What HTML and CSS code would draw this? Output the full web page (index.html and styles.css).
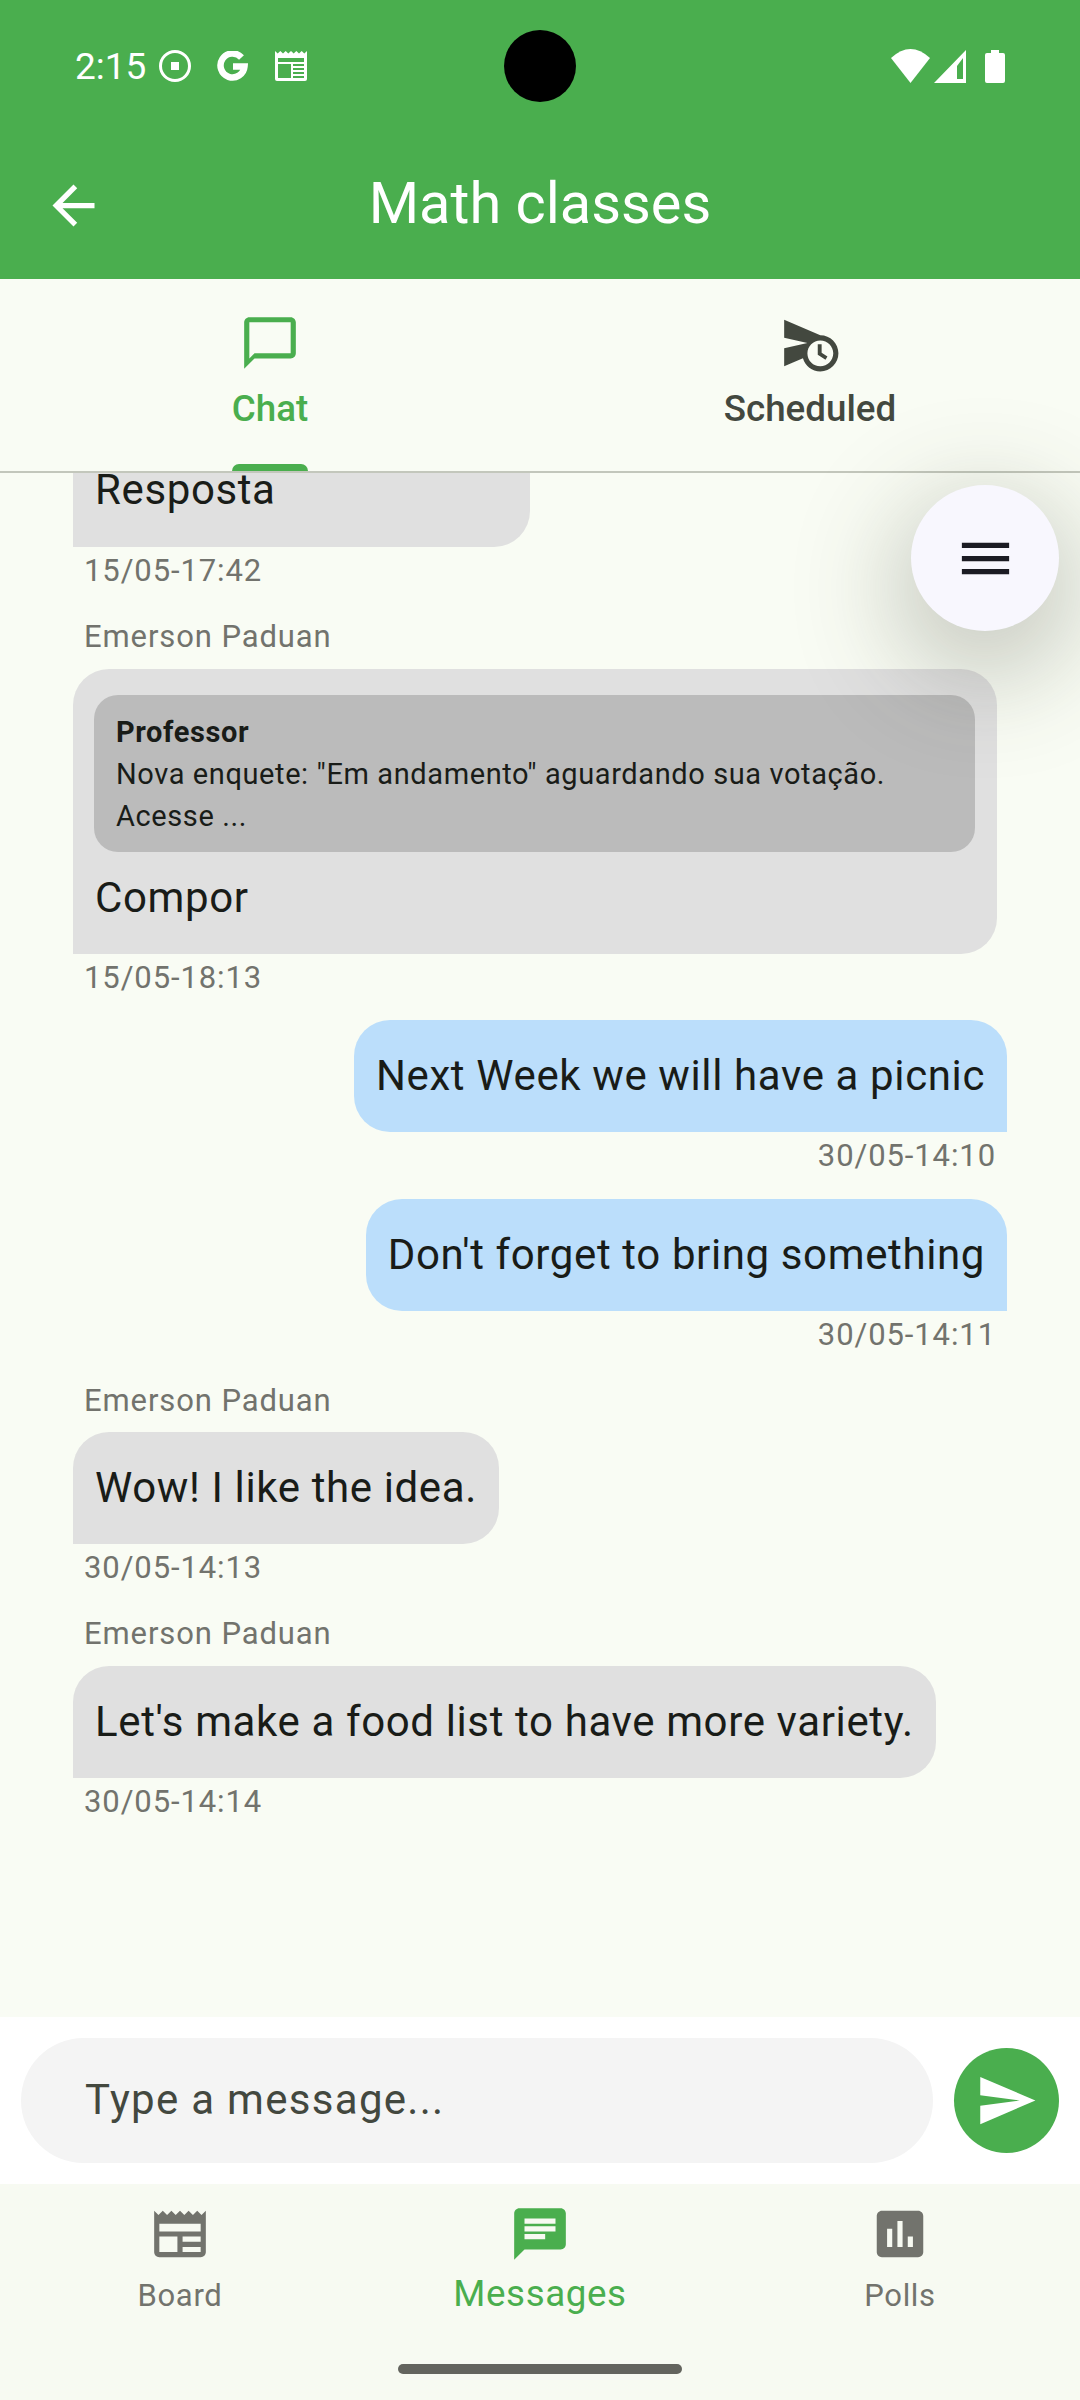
FILE: index.html
```html
<!DOCTYPE html>
<html lang="en">
<head>
    <meta charset="utf-8">
    <title>Math classes</title>
    <link rel="stylesheet" href="styles.css">
</head>
<body>
<div class="screen">
    <header class="header">
        <div class="status">
            <div class="status-left">
                <span class="clock">2:15</span>
                <svg class="st-record" viewBox="0 0 32 32"><circle cx="16" cy="16" r="14.5" fill="none" stroke="#fff" stroke-width="3"/><rect x="12" y="12" width="8" height="8" fill="#fff"/></svg>
                <svg class="st-g" viewBox="0 0 32 30"><path d="M24.500 6.500A12 12 0 1 0 27.500 15.500H16" fill="none" stroke="#fff" stroke-width="6.500"/></svg>
                <svg class="st-news" viewBox="0 0 32 30"><path d="M0 0l2.700 2.500L5.300 0 8 2.500 10.700 0l2.600 2.500L16 0l2.700 2.500L21.300 0 24 2.500 26.700 0l2.600 2.500L32 0v28a2 2 0 0 1-2 2H2a2 2 0 0 1-2-2z" fill="#fff"/><path d="M3 7h26v4H3zM3 13h13v14H3zM18 13h11v2H18zM18 17h11v2H18zM18 21h11v2H18zM18 25h11v2H18z" fill="#4aae4e"/></svg>
            </div>
            <div class="status-right">
                <svg class="st-wifi" viewBox="0 0 39 34"><path d="M0 9Q19.500-9 39 9L19.500 34z" fill="#fff"/></svg>
                <svg class="st-signal" viewBox="0 0 32 33"><path fill-rule="evenodd" d="M32 0v33H0zM23 16v13h6V8z" fill="#fff"/></svg>
                <svg class="st-battery" viewBox="0 0 20 33"><path d="M6 0h8v3h4a2 2 0 0 1 2 2v26a2 2 0 0 1-2 2H2a2 2 0 0 1-2-2V5a2 2 0 0 1 2-2h4z" fill="#fff"/></svg>
            </div>
        </div>
        <div class="appbar">
            <svg class="back" viewBox="0 0 24 24"><path d="M20 11H7.830l5.590-5.590L12 4l-8 8 8 8 1.410-1.410L7.830 13H20v-2z" fill="#fff"/></svg>
            <h1 class="title">Math classes</h1>
        </div>
    </header>

    <nav class="tabs">
        <div class="tab tab-active">
            <svg class="tab-icon" viewBox="0 0 24 24"><path d="M20 2H4c-1.100 0-2 .9-2 2v18l4-4h14c1.100 0 2-.9 2-2V4c0-1.100-.9-2-2-2zm0 14H6l-2 2V4h16v12z" fill="#4aae4e"/></svg>
            <span class="tab-label">Chat</span>
            <span class="tab-bar"></span>
        </div>
        <div class="tab">
            <svg class="tab-icon" viewBox="0 0 24 24"><path d="M16.500 12.500H15v4l3 2 .75-1.230-2.250-1.520zM16 9L2 3v7l9 2-9 2v7l7.270-3.110C10.090 20.830 12.790 23 16 23c3.860 0 7-3.140 7-7s-3.140-7-7-7zm0 12c-2.750 0-4.980-2.220-5-4.970v-.07c.02-2.740 2.250-4.960 5-4.960 2.760 0 5 2.240 5 5s-2.240 5-5 5z" fill="#43483f"/></svg>
            <span class="tab-label">Scheduled</span>
        </div>
    </nav>

    <main class="messages">
        <div class="message-list">
            <div class="msg">
                <div class="bubble bubble-in bubble-clipped"><span class="text">Resposta</span></div>
                <div class="time">15/05-17:42</div>
            </div>
            <div class="msg">
                <div class="sender">Emerson Paduan</div>
                <div class="bubble bubble-in bubble-reply">
                    <div class="quote">
                        <div class="quote-author">Professor</div>
                        <div class="quote-text">Nova enquete: "Em andamento" aguardando sua votação. Acesse ...</div>
                    </div>
                    <span class="text">Compor</span>
                </div>
                <div class="time">15/05-18:13</div>
            </div>
            <div class="msg msg-out">
                <div class="bubble bubble-out"><span class="text">Next Week we will have a picnic</span></div>
                <div class="time">30/05-14:10</div>
            </div>
            <div class="msg msg-out">
                <div class="bubble bubble-out"><span class="text">Don't forget to bring something</span></div>
                <div class="time">30/05-14:11</div>
            </div>
            <div class="msg">
                <div class="sender">Emerson Paduan</div>
                <div class="bubble bubble-in"><span class="text">Wow! I like the idea.</span></div>
                <div class="time">30/05-14:13</div>
            </div>
            <div class="msg">
                <div class="sender">Emerson Paduan</div>
                <div class="bubble bubble-in"><span class="text">Let's make a food list to have more variety.</span></div>
                <div class="time">30/05-14:14</div>
            </div>
        </div>
        <div class="fab">
            <svg class="fab-icon" viewBox="0 0 24 24"><path d="M3 18h18v-2H3v2zm0-5h18v-2H3v2zm0-7v2h18V6H3z" fill="#1b1b23"/></svg>
        </div>
    </main>

    <div class="composer">
        <div class="composer-input">Type a message...</div>
        <div class="send">
            <svg class="send-icon" viewBox="0 0 24 24"><path d="M2.010 21L23 12 2.010 3 2 10l15 2-15 2z" fill="#fff"/></svg>
        </div>
    </div>

    <nav class="bottom-nav">
        <div class="nav-item">
            <svg class="nav-icon" viewBox="0 0 24 24"><path d="M22 3l-1.670 1.670L18.670 3 17 4.670 15.330 3l-1.660 1.670L12 3l-1.670 1.670L8.670 3 7 4.670 5.330 3 3.670 4.670 2 3v16c0 1.100.9 2 2 2h16c1.100 0 2-.9 2-2V3zM11 19H4v-6h7v6zm9 0h-7v-2h7v2zm0-4h-7v-2h7v2zm0-4H4V8h16v3z" fill="#72736d"/></svg>
            <span class="nav-label">Board</span>
        </div>
        <div class="nav-item nav-item-active">
            <svg class="nav-icon" viewBox="0 0 24 24"><path d="M20 2H4c-1.100 0-1.990.9-1.990 2L2 22l4-4h14c1.100 0 2-.9 2-2V4c0-1.100-.9-2-2-2zM6 9h12v2H6V9zm8 5H6v-2h8v2zm4-6H6V6h12v2z" fill="#4aae4e"/></svg>
            <span class="nav-label">Messages</span>
        </div>
        <div class="nav-item">
            <svg class="nav-icon" viewBox="0 0 24 24"><path d="M19 3H5c-1.100 0-2 .9-2 2v14c0 1.100.9 2 2 2h14c1.100 0 2-.9 2-2V5c0-1.100-.9-2-2-2zM9 17H7v-7h2v7zm4 0h-2V7h2v10zm4 0h-2v-4h2v4z" fill="#72736d"/></svg>
            <span class="nav-label">Polls</span>
        </div>
        <div class="home-bar"></div>
    </nav>
</div>
</body>
</html>
```

FILE: styles.css
```css
* {
    box-sizing: border-box;
}

body {
    margin: 0;
    font-family: Roboto, sans-serif;
    background-color: #f9fcf4;
}

.screen {
    width: 1080px;
    height: 2400px;
    display: flex;
    flex-direction: column;
    overflow: hidden;
}

/* green top part */
.header {
    height: 279px;
    background-color: #4aae4e;
    color: white;
    flex: none;
    position: relative;
}

.header::after {
    content: "";
    position: absolute;
    left: 504px;
    top: 30px;
    width: 72px;
    height: 72px;
    border-radius: 50%;
    background-color: black;
}

.status {
    height: 132px;
    padding: 0 75px;
    display: flex;
    justify-content: space-between;
    align-items: center;
}

.status-left,
.status-right {
    display: flex;
    align-items: center;
}

.clock {
    font-size: 37px;
    width: 84px;
}

.st-record {
    width: 32px;
    height: 32px;
}

.st-g {
    width: 32px;
    height: 30px;
    margin-left: 26px;
}

.st-news {
    width: 32px;
    height: 30px;
    margin-left: 26px;
}

.st-wifi {
    width: 39px;
    height: 34px;
}

.st-signal {
    width: 32px;
    height: 33px;
    margin-left: 4px;
}

.st-battery {
    width: 20px;
    height: 33px;
    margin-left: 19px;
}

.appbar {
    height: 147px;
    display: flex;
    align-items: center;
    justify-content: center;
    position: relative;
}

.back {
    position: absolute;
    left: 42px;
    top: 42px;
    width: 63px;
    height: 63px;
}

.title {
    margin: 0 0 4px;
    font-size: 57.75px;
    font-weight: 400;
    line-height: 1;
}

/* Chat / Scheduled tabs */
.tabs {
    height: 194px;
    flex: none;
    display: flex;
    border-bottom: 2px solid #c3c7bc;
}

.tab {
    flex: 1;
    display: flex;
    flex-direction: column;
    align-items: center;
    padding-top: 33px;
    position: relative;
    color: #43483f;
}

.tab-active {
    color: #4aae4e;
}

.tab-icon {
    width: 62px;
    height: 62px;
}

.tab-label {
    margin-top: 13px;
    font-size: 36.75px;
    font-weight: 500;
    line-height: 44px;
}

.tab-bar {
    position: absolute;
    bottom: 0;
    left: 232px;
    width: 76px;
    height: 7px;
    border-radius: 8px 8px 0 0;
    background-color: #4aae4e;
}

/* chat list */
.messages {
    flex: 1;
    position: relative;
}

.message-list {
    padding: 0 73px;
    display: flex;
    flex-direction: column;
}

.msg {
    display: flex;
    flex-direction: column;
    align-items: flex-start;
    margin-bottom: 24.5px;
}

.msg-out {
    align-items: flex-end;
}

.sender {
    margin: 5.5px 11px 13.5px;
    font-size: 31px;
    line-height: 36px;
    letter-spacing: 0.9px;
    color: #72736d;
}

.time {
    margin: 6px 11px 0;
    font-size: 31px;
    line-height: 36px;
    letter-spacing: 0.9px;
    color: #72736d;
}

.bubble {
    padding: 22px;
    min-height: 112px;
    color: #191c18;
}

.bubble-in {
    background-color: #e0e0e0;
    border-radius: 36px 36px 36px 0;
}

.bubble-out {
    background-color: #bbdefb;
    border-radius: 36px 36px 0 36px;
}

/* first one is scrolled under the tabs */
.bubble-clipped {
    width: 457px;
    height: 74px;
    min-height: 0;
    padding: 0 22px;
    border-radius: 0 0 36px 0;
}

.bubble-clipped .text {
    line-height: 34px;
}

.bubble-reply {
    width: 924px;
    height: 285px;
    padding: 26px 22px 22px 21px;
}

.bubble-reply .text {
    margin-left: 1px;
}

.text {
    font-size: 42px;
    line-height: 68px;
    letter-spacing: 0.62px;
    display: block;
}

.quote {
    background-color: #bbbbbb;
    border-radius: 24px;
    padding: 16px 22px 18px;
    height: 157px;
    margin-bottom: 12px;
}

.quote-author,
.quote-text {
    font-size: 29px;
    line-height: 42px;
    letter-spacing: 0.6px;
}

.quote-author {
    font-weight: 700;
}

.fab {
    position: absolute;
    top: 12px;
    right: 21px;
    width: 148px;
    height: 146px;
    border-radius: 50%;
    background-color: #f8f7fe;
    box-shadow: 0 30px 100px 20px rgba(60, 64, 50, 0.26);
    display: flex;
    align-items: center;
    justify-content: center;
}

.fab-icon {
    width: 63px;
    height: 63px;
}

/* message input */
.composer {
    height: 167px;
    flex: none;
    background-color: white;
    padding: 0 21px;
    display: flex;
    align-items: center;
    justify-content: space-between;
}

.composer-input {
    width: 912px;
    height: 125px;
    border-radius: 63px;
    background-color: #f4f4f4;
    padding: 0 0 2px 64px;
    display: flex;
    align-items: center;
    font-size: 42px;
    letter-spacing: 1.3px;
    color: #43483f;
}

.send {
    width: 105px;
    height: 105px;
    border-radius: 50%;
    background-color: #4aae4e;
    display: flex;
    align-items: center;
    justify-content: center;
}

.send-icon {
    width: 63px;
    height: 63px;
}

/* bottom navigation */
.bottom-nav {
    height: 216px;
    flex: none;
    background-color: #f7faf2;
    display: flex;
    position: relative;
    padding-top: 19px;
}

.nav-item {
    flex: 1;
    display: flex;
    flex-direction: column;
    align-items: center;
    color: #72736d;
}

.nav-icon {
    width: 62px;
    height: 62px;
}

.nav-label {
    margin-top: 13px;
    font-size: 31px;
    line-height: 36px;
    letter-spacing: 0.7px;
}

.nav-item-active {
    color: #4aae4e;
}

.nav-item-active .nav-label {
    font-size: 36.75px;
    margin-top: 8px;
    line-height: 42px;
    letter-spacing: 0.6px;
}

.home-bar {
    position: absolute;
    left: 398px;
    bottom: 26px;
    width: 284px;
    height: 10px;
    border-radius: 5px;
    background-color: #63645e;
}
```
